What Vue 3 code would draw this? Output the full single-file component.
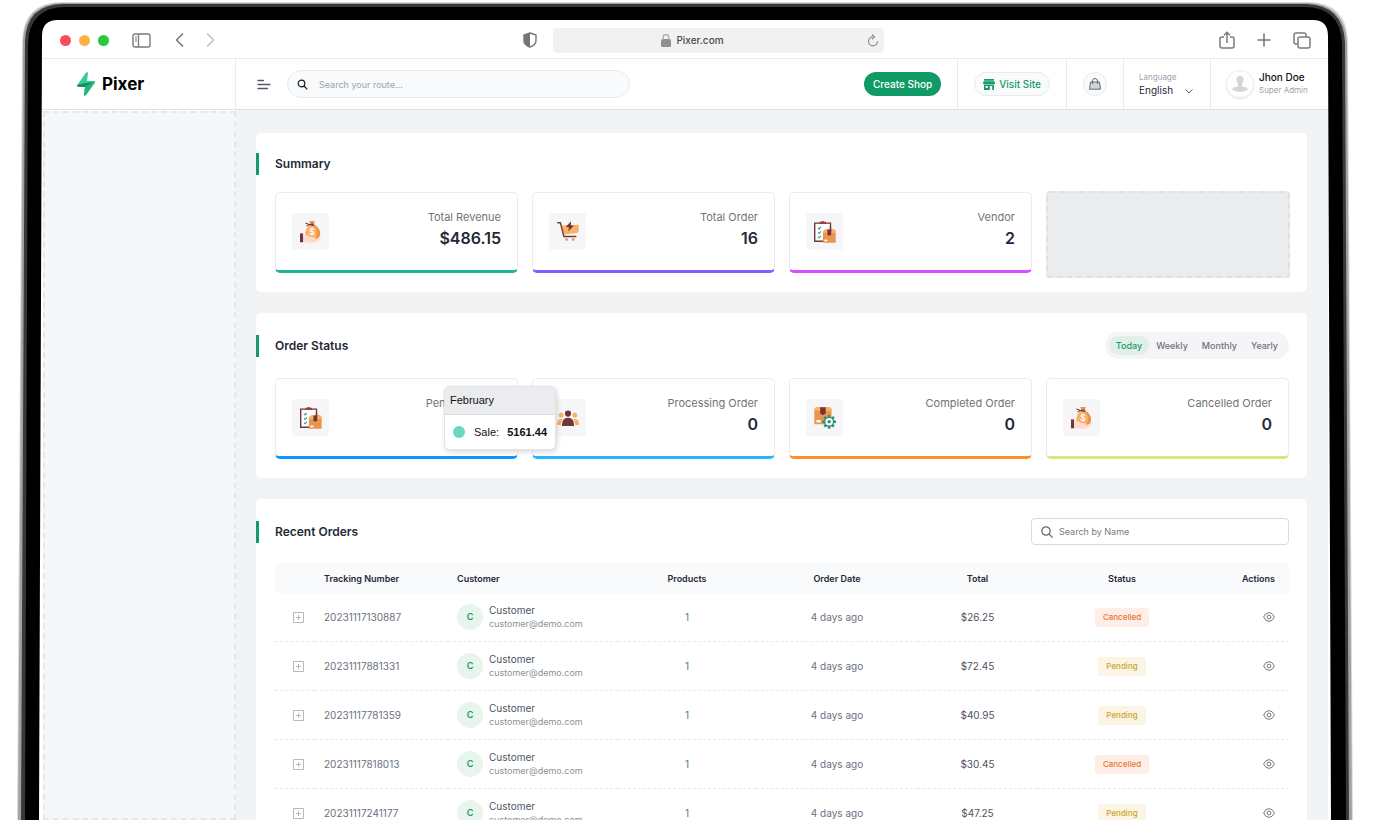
<script setup>
import { ref } from 'vue'

const summary = [
  { label: 'Total Revenue', value: '$486.15', icon: 'money', tone: 'teal' },
  { label: 'Total Order', value: '16', icon: 'cart', tone: 'violet' },
  { label: 'Vendor', value: '2', icon: 'checklist', tone: 'pink' },
]

const statuses = [
  { label: 'Pending Order', value: '0', icon: 'checklist', tone: 'blue', tooltip: true },
  { label: 'Processing Order', value: '0', icon: 'people', tone: 'sky' },
  { label: 'Completed Order', value: '0', icon: 'package', tone: 'orange' },
  { label: 'Cancelled Order', value: '0', icon: 'money', tone: 'lime' },
]

const ranges = ['Today', 'Weekly', 'Monthly', 'Yearly']
const activeRange = ref('Today')

const orders = [
  { tracking: '20231117130887', total: '$26.25', status: 'Cancelled' },
  { tracking: '20231117881331', total: '$72.45', status: 'Pending' },
  { tracking: '20231117781359', total: '$40.95', status: 'Pending' },
  { tracking: '20231117818013', total: '$30.45', status: 'Cancelled' },
  { tracking: '20231117241177', total: '$47.25', status: 'Pending' },
]

const routeSearch = ref('')
const nameSearch = ref('')
const language = ref('English')
</script>

<template>
  <div class="device">
    <svg class="bezel" viewBox="0 0 1376 820" preserveAspectRatio="none" aria-hidden="true">
      <path fill="#d9d9d9" d="M17 824 L22 42 Q23 2 62 2 H1308 Q1347 2 1348 42 L1353 824Z" />
      <path fill="#a2a2a4" d="M18 824 L23 42 Q24 3 63 3 H1307 Q1345 4 1347 42 L1352 824Z" />
      <path fill="#38383a" d="M21 824 L25 42 Q26 4 64 4 H1306 Q1343 5 1345 42 L1349 824Z" />
      <path fill="#000" d="M25 824 L28 44 Q29 7 66 7 H1304 Q1341 7 1342 44 L1346 824Z" />
      <path fill="#fff" d="M39 824 L42 36 Q42 20 58 20 H1313 Q1328 20 1328 36 L1331 824Z" />
    </svg>

    <svg class="sprite" aria-hidden="true">
      <symbol id="money" viewBox="0 0 64 64">
        <path fill="#e9954f" d="M27 0h16l-3 9 h-10z" />
        <path fill="#fab066" d="M28 10h12c13 8 20 20 18 31-2 9-8 12-22 12s-21-4-21-14c0-12 5-21 13-29z" />
        <path fill="#e9954f" d="M38 10h3c13 8 20 20 17 31-1 7-6 11-15 12 9-12 9-29-5-43z" />
        <path fill="none" stroke="#723538" stroke-width="3" d="M16 6l11 4 14-1M19 15l8-5 14 3" />
        <text x="35" y="40" text-anchor="middle" font-family="Inter, sans-serif" font-size="24" font-weight="600" fill="#fff">$</text>
        <path fill="#ffd9cd" d="M10 44c8-4 13-3 19 2l14 2c3 1 3 3 1 5 7 0 12-8 19-8-3 8-12 17-26 18-12 0-19-2-27-3z" />
        <path fill="#723538" d="M0 36h9v26H0z" />
      </symbol>
      <symbol id="cart" viewBox="0 0 64 64">
        <path fill="#fab066" d="M14 13 63 11v19q0 4-5 5l-38 4z" />
        <path fill="#723538" d="m41 1-15 16 9 2-2 11 16-16-9-2z" />
        <path fill="none" stroke="#723538" stroke-width="4" stroke-linecap="round" stroke-linejoin="round" d="M2 5h8l10 40h35" />
        <circle cx="28" cy="54" r="4" fill="#e9954f" />
        <circle cx="47" cy="54" r="4" fill="#e9954f" />
      </symbol>
      <symbol id="checklist" viewBox="0 0 64 64">
        <path fill="#fff" stroke="#723538" stroke-width="4" d="M2 6h46v53H2z" />
        <path fill="#9b3f42" d="M16 2h5q4-5 8 0h6v7H16z" />
        <path fill="none" stroke="#2f967f" stroke-width="3" d="m12 20 3 3 5-6M12 33l3 3 5-6M12 46l3 3 5-6" />
        <path fill="#e9954f" d="M26 33q1-8 9-9h20q8 1 8 9v30H26z" />
        <path fill="#fab066" d="M26 35q1-10 9-11h20q8 1 8 11z" />
        <path fill="#723538" d="M39 25h11v15l-5 3-6-3z" />
        <path fill="#fff" d="M30 54h9v5h-9z" />
        <path fill="none" stroke="#723538" stroke-width="4" d="M48 16v16" />
      </symbol>
      <symbol id="people" viewBox="0 0 64 64">
        <circle cx="12" cy="24" r="7" fill="#fab066" />
        <circle cx="52" cy="24" r="7" fill="#fab066" />
        <path fill="#fab066" d="M0 52q0-18 12-18 7 0 9 5v13zM64 52q0-18-12-18-7 0-9 5v13z" />
        <path fill="#f6f6f8" d="M11 55q0-26 21-26t21 26z" />
        <path fill="#723538" d="M14 55q0-24 18-24t18 24z" />
        <circle cx="32" cy="19" r="9" fill="#723538" />
      </symbol>
      <symbol id="package" viewBox="0 0 64 64">
        <path fill="#e9954f" d="M1 9q1-8 8-8h34q8 0 8 8v41H1z" />
        <path fill="#fab066" d="M1 11q1-10 8-10h34q8 0 8 10z" />
        <path fill="#723538" d="M18 1h16v18l-8 5-8-5z" />
        <path fill="#fff" d="M7 38h13v7H7z" />
        <circle cx="44" cy="43" r="15" fill="#2f8f7b" />
        <path stroke="#2f8f7b" stroke-width="7" d="M44 23v40M24 43h40M30 29l28 28M58 29 30 57" />
        <circle cx="44" cy="43" r="9" fill="#2f8f7b" stroke="#fff" stroke-width="4" />
        <circle cx="44" cy="43" r="8" fill="#fff" />
        <circle cx="44" cy="43" r="5" fill="#2f8f7b" />
      </symbol>
    </svg>

    <div class="screen">
      <div class="browser-bar">
        <div class="bar-left">
          <span class="light red"></span>
          <span class="light amber"></span>
          <span class="light green"></span>
          <button type="button" class="bar-btn panel-btn" aria-label="Toggle sidebar">
            <svg width="19" height="15" viewBox="0 0 19 15" fill="none" stroke="#7b7b7b">
              <rect x="1" y="1" width="17" height="13" rx="2" stroke-width="1.4" />
              <path d="M6.5 1v13" stroke-width="1.3" />
              <path d="M3 4h2M3 6h2M3 8h2" />
            </svg>
          </button>
          <button type="button" class="bar-btn back-btn" aria-label="Back">
            <svg width="10" height="14" viewBox="0 0 10 14" fill="none" stroke="#757575" stroke-width="1.5"><path d="M8 .5 1.500 7 8 13.500" /></svg>
          </button>
          <button type="button" class="bar-btn forward-btn" aria-label="Forward">
            <svg width="10" height="14" viewBox="0 0 10 14" fill="none" stroke="#c0c0c0" stroke-width="1.5"><path d="M2 .5 8.500 7 2 13.500" /></svg>
          </button>
          <svg class="shield" width="14" height="16" viewBox="0 0 14 16">
            <path fill="#fff" stroke="#757575" stroke-width="1.4" d="M7 1 13 3v6c0 3-3 5-6 6.200C4 14 1 12 1 9V3z" />
            <path fill="#757575" d="M7 1v14.200C4 14 1 12 1 9V3z" />
          </svg>
        </div>
        <div class="address">
          <svg class="lock" width="10" height="13" viewBox="0 0 10 13">
            <rect y="5" width="10" height="8" rx="1.500" fill="#919191" />
            <path d="M2.200 6V3.500a2.800 2.800 0 0 1 5.600 0V6" fill="none" stroke="#a5a5a5" stroke-width="1.200" />
          </svg>
          <span>Pixer.com</span>
          <svg class="reload" width="12" height="13" viewBox="0 0 12 13" fill="none" stroke="#8c8c8c" stroke-width="1.200">
            <path d="M6 2.800A4.500 4.500 0 1 0 10.500 7.300M5 .5l2.500 2.300L5 5.300" />
          </svg>
        </div>
        <div class="bar-right">
          <button type="button" class="bar-btn" aria-label="Share">
            <svg width="16" height="18" viewBox="0 0 16 18" fill="none" stroke="#7b7b7b" stroke-width="1.500">
              <path d="M5 6H3Q1 6 1 8v7q0 2 2 2h10q2 0 2-2V8q0-2-2-2h-2M8 12V1.500M5 4.200l3-3 3 3" />
            </svg>
          </button>
          <button type="button" class="bar-btn" aria-label="New tab">
            <svg width="14" height="14" viewBox="0 0 14 14" fill="none" stroke="#7b7b7b" stroke-width="1.600"><path d="M7 .5v13M.5 7h13" /></svg>
          </button>
          <button type="button" class="bar-btn" aria-label="Show tabs">
            <svg width="18" height="17" viewBox="0 0 18 17" fill="none" stroke="#7b7b7b" stroke-width="1.500">
              <rect x="5" y="5" width="12" height="11" rx="2" />
              <path d="M5 12H3q-2 0-2-2V3q0-2 2-2h8q2 0 2 2v2" />
            </svg>
          </button>
        </div>
      </div>

      <header class="header">
        <a href="#" class="logo">
          <svg width="18" height="24" viewBox="0 0 18 24">
            <path fill="#36cf9a" d="M9 .5q2-.8 2 1L10 9h7q1.500.5.5 2L9 23q-2 1.500-2-.5L8 15H1.500Q-.5 14.500.7 12.500z" />
            <path fill="#159260" d="m.7 12.500 16.900-3L8 15H1.500Q-.5 14.500.7 12.500z" />
            <path fill="#22b57f" d="M17.500 9.200q.7.700 0 1.800L9 23q-2 1.500-2-.5L8 15z" />
          </svg>
          <span>Pixer</span>
        </a>
        <div class="nav">
          <button type="button" class="menu-btn" aria-label="Toggle menu">
            <svg width="14" height="11" viewBox="0 0 14 11" fill="none" stroke="#4f5869" stroke-width="1.300" stroke-linecap="round">
              <path d="M1 1.500h5.500M1 5.500h12M1 9.500h9.500" />
            </svg>
          </button>
          <label class="route-search">
            <svg width="11" height="11" viewBox="0 0 11 11" fill="none" stroke="#16191f" stroke-width="1.200"><circle cx="4.500" cy="4.500" r="3.300" /><path d="m7 7 3.300 3.300" /></svg>
            <input v-model="routeSearch" type="text" placeholder="Search your route..." aria-label="Search your route" />
          </label>
          <button type="button" class="create-btn">Create Shop</button>
        </div>
        <div class="cell">
          <a href="#" class="visit">
            <svg width="12" height="11" viewBox="0 0 12 11" fill="#159a69">
              <path d="M1 0h10v1.700H1zM.5 2.200h11L12 5H0z" />
              <path d="M1 5.500h10V11H9.200V7H6.800v4H1zM2.500 7v2h2.300V7z" fill-rule="evenodd" />
            </svg>
            Visit Site
          </a>
        </div>
        <div class="cell">
          <button type="button" class="bag" aria-label="Orders">
            <svg width="12" height="12" viewBox="0 0 12 12" fill="none" stroke="#636b78">
              <path d="M1.500 4h9l1 7.200H.5z" fill="#cfd3da" /><path d="M3.500 6V3a2.500 2.500 0 0 1 5 0v3" />
            </svg>
          </button>
        </div>
        <div class="cell language">
          <label for="language">Language</label>
          <select id="language" v-model="language">
            <option>English</option>
          </select>
          <svg class="caret" width="8" height="5" viewBox="0 0 8 5" fill="none" stroke="#555d68"><path d="m.5.5 3.500 3.500L7.500.5" /></svg>
        </div>
        <div class="cell user">
          <span class="avatar">
            <svg width="16" height="16" viewBox="0 0 16 16" fill="#d4d6d9">
              <path d="M8 0q4 0 3.600 4Q11 8 8 8.500 5 8 4.400 4 4 0 8 0z" /><path d="M6 7h4v3.500q6 .5 6 3Q13 16 8 16t-8-2.500q0-2.500 6-3z" />
            </svg>
          </span>
          <span class="user-text">
            <strong>Jhon Doe</strong>
            <small>Super Admin</small>
          </span>
        </div>
      </header>

      <div class="body">
        <aside class="sidebar"></aside>
        <main class="main">
          <section class="panel">
            <div class="panel-head short">
              <h2>Summary</h2>
            </div>
            <div class="stats">
              <article v-for="item in summary" :key="item.label" class="stat" :class="item.tone">
                <span class="stat-icon"><svg width="22" height="22"><use :href="`#${item.icon}`" /></svg></span>
                <div class="stat-text">
                  <p>{{ item.label }}</p>
                  <strong>{{ item.value }}</strong>
                </div>
              </article>
              <div class="placeholder"></div>
            </div>
          </section>

          <section class="panel">
            <div class="panel-head">
              <h2>Order Status</h2>
              <div class="ranges">
                <button
                  v-for="range in ranges"
                  :key="range"
                  type="button"
                  :class="{ active: range === activeRange }"
                  @click="activeRange = range"
                >
                  {{ range }}
                </button>
              </div>
            </div>
            <div class="stats">
              <article v-for="item in statuses" :key="item.label" class="stat" :class="item.tone">
                <span class="stat-icon"><svg width="22" height="22"><use :href="`#${item.icon}`" /></svg></span>
                <div class="stat-text">
                  <p>{{ item.label }}</p>
                  <strong>{{ item.value }}</strong>
                </div>
                <div v-if="item.tooltip" class="tooltip">
                  <div class="tooltip-title">February</div>
                  <div class="tooltip-row"><i></i><span>Sale:</span><b>5161.44</b></div>
                </div>
              </article>
            </div>
          </section>

          <section class="panel">
            <div class="panel-head">
              <h2>Recent Orders</h2>
              <label class="name-search">
                <svg width="12" height="12" viewBox="0 0 12 12" fill="none" stroke="#666" stroke-width="1.200"><circle cx="5" cy="5" r="4.200" /><path d="m8 8 3.600 3.600" /></svg>
                <input v-model="nameSearch" type="text" placeholder="Search by Name" aria-label="Search by Name" />
              </label>
            </div>
            <table class="orders">
              <colgroup>
                <col class="col-expand" />
                <col class="col-tracking" />
                <col class="col-customer" />
                <col class="col-products" />
                <col class="col-date" />
                <col class="col-total" />
                <col class="col-status" />
                <col class="col-actions" />
              </colgroup>
              <thead>
                <tr>
                  <th></th>
                  <th class="left">Tracking Number</th>
                  <th class="left">Customer</th>
                  <th>Products</th>
                  <th>Order Date</th>
                  <th>Total</th>
                  <th>Status</th>
                  <th class="right">Actions</th>
                </tr>
              </thead>
              <tbody>
                <tr v-for="order in orders" :key="order.tracking">
                  <td>
                    <button type="button" class="icon-btn expand" aria-label="Expand row">
                      <svg width="11" height="11" viewBox="0 0 11 11" fill="none" stroke="#b9b9b9"><path d="M.5.5h10v10H.5zM3 5.500h5M5.500 3v5" /></svg>
                    </button>
                  </td>
                  <td class="left">{{ order.tracking }}</td>
                  <td class="left">
                    <div class="customer">
                      <span class="initial">C</span>
                      <span class="customer-text">
                        <span>Customer</span>
                        <small>customer@demo.com</small>
                      </span>
                    </div>
                  </td>
                  <td>1</td>
                  <td>4 days ago</td>
                  <td class="total">{{ order.total }}</td>
                  <td><span class="badge" :class="order.status.toLowerCase()">{{ order.status }}</span></td>
                  <td class="right">
                    <button type="button" class="icon-btn view" aria-label="View order">
                      <svg width="12" height="10" viewBox="0 0 12 10" fill="none" stroke="#6b6b6b" stroke-width=".9"><path d="M.6 5Q2.500.6 6 .6T11.400 5Q9.500 9.400 6 9.400T.6 5z" /><circle cx="6" cy="5" r="1.900" /></svg>
                    </button>
                  </td>
                </tr>
              </tbody>
            </table>
          </section>
        </main>
      </div>
    </div>
  </div>
</template>

<style>
body {
  margin: 0;
  background: #fff;
}
</style>

<style scoped>
.device {
  position: relative;
  box-sizing: border-box;
  height: 100vh;
  padding: 20px 48px 0 42px;
  overflow: hidden;
  font-family: Inter, sans-serif;
  font-size: 10px;
  color: #6b7280;
}

.device *,
.device *::before {
  box-sizing: border-box;
}

.bezel {
  position: absolute;
  inset: 0;
  width: 100%;
  height: 100%;
}

.sprite {
  display: none;
}

button,
input,
select {
  font: inherit;
  color: inherit;
  border: 0;
  margin: 0;
  padding: 0;
  background: none;
}

button {
  cursor: pointer;
}

a {
  text-decoration: none;
}

.screen {
  position: relative;
  display: flex;
  flex-direction: column;
  height: 100%;
}

/* browser chrome */
.browser-bar {
  display: grid;
  grid-template-columns: 511fr 331fr 444fr;
  align-items: center;
  flex: none;
  height: 39px;
  border-bottom: 1px solid #ececec;
}

.bar-left {
  display: flex;
  align-items: center;
  padding: 2px 16px 0 18px;
}

.light {
  width: 11px;
  height: 11px;
  margin-right: 8px;
  border-radius: 50%;
}

.red {
  background: #fc4b5a;
}

.amber {
  background: #fdb244;
}

.green {
  background: #28c840;
}

.bar-btn {
  display: flex;
}

.panel-btn {
  margin-left: 15px;
}

.back-btn {
  margin-left: 24px;
}

.forward-btn {
  margin-left: 20px;
}

.shield {
  margin-left: auto;
}

.address {
  position: relative;
  display: flex;
  align-items: center;
  justify-content: center;
  gap: 5px;
  height: 25px;
  margin-top: 2px;
  padding-right: 52px;
  border-radius: 4px;
  background: #f1f1f1;
  color: #4b4b4b;
  font-weight: 500;
}

.reload {
  position: absolute;
  right: 5px;
}

.bar-right {
  display: flex;
  align-items: center;
  justify-content: flex-end;
  gap: 22px;
  padding: 2px 17px 0 0;
}

/* app header */
.header {
  display: flex;
  flex: none;
  height: 51px;
  border-bottom: 1px solid #dfe2e5;
}

.logo {
  display: flex;
  align-items: center;
  gap: 7px;
  width: 194px;
  padding-left: 35px;
  border-right: 1px solid #ececec;
  color: #000;
  font-size: 17px;
  font-weight: 700;
}

.nav {
  display: flex;
  flex: 1;
  align-items: center;
  padding: 0 16px 0 21px;
}

.menu-btn {
  display: flex;
  margin-right: 16px;
}

.route-search {
  display: flex;
  align-items: center;
  gap: 11px;
  width: 343px;
  height: 28px;
  padding: 0 9px;
  border: 1px solid #e8eaee;
  border-radius: 14px;
  background: #f9fafc;
  font-size: 9px;
}

.route-search input,
.name-search input {
  flex: 1;
  min-width: 0;
  outline: 0;
}

.route-search input::placeholder {
  color: #9ca3af;
}

.create-btn {
  height: 24px;
  margin-left: auto;
  padding: 0 9px;
  border-radius: 12px;
  background: #109a66;
  color: #fff;
  font-weight: 500;
}

.cell {
  display: flex;
  align-items: center;
  padding: 0 16px;
  border-left: 1px solid #ececec;
}

.visit {
  display: flex;
  align-items: center;
  gap: 4px;
  height: 24px;
  padding: 0 8px;
  border: 1px solid #e8eaee;
  border-radius: 12px;
  background: #f9fafc;
  color: #159a69;
  font-weight: 500;
}

.bag {
  display: flex;
  align-items: center;
  justify-content: center;
  width: 24px;
  height: 24px;
  border: 1px solid #e8eaee;
  border-radius: 50%;
  background: #f9fafc;
}

.language {
  position: relative;
  flex-direction: column;
  align-items: flex-start;
  justify-content: center;
  width: 87px;
  padding-left: 15px;
}

.language label {
  color: #9ca3af;
  font-size: 8px;
  line-height: 13px;
}

.language select {
  width: 100%;
  height: 13px;
  appearance: none;
  color: #1f2937;
  line-height: 13px;
}

.caret {
  position: absolute;
  right: 17px;
  bottom: 15px;
  pointer-events: none;
}

.user {
  gap: 5px;
  width: 118px;
  padding: 0 0 0 15px;
}

.avatar {
  display: flex;
  align-items: center;
  justify-content: center;
  width: 28px;
  height: 28px;
  border: 1px solid #eee;
  border-radius: 50%;
  box-shadow: 0 1px 2px rgba(0, 0, 0, 0.12);
}

.user-text {
  display: flex;
  flex-direction: column;
}

.user-text strong {
  color: #111;
  font-weight: 500;
  line-height: 13px;
}

.user-text small {
  color: #9ca3af;
  font-size: 8px;
  line-height: 13px;
}

/* page */
.body {
  display: flex;
  flex: 1;
  min-height: 0;
}

.sidebar {
  flex: none;
  width: 193px;
  margin: 1px 0 0 1px;
  border: 2px dashed #e2e8ee;
  background: #f5f7f9;
}

.main {
  display: flex;
  flex: 1;
  flex-direction: column;
  gap: 21px;
  min-width: 0;
  padding: 23px 21px 0 20px;
  overflow: hidden;
  background: #f2f3f5;
}

.panel {
  flex: none;
  padding: 19px 18px 19px 19px;
  border-radius: 5px;
  background: #fff;
}

.panel-head {
  position: relative;
  display: flex;
  align-items: center;
  justify-content: space-between;
  height: 27px;
  margin-bottom: 19px;
}

.panel-head.short {
  height: 23px;
  margin-bottom: 17px;
}

.panel-head::before {
  content: '';
  position: absolute;
  left: -19px;
  width: 3px;
  height: 22px;
  background: #159a69;
}

.panel-head h2 {
  margin: 0;
  color: #1f2937;
  font-size: 12px;
  font-weight: 600;
}

.stats {
  display: grid;
  grid-template-columns: repeat(4, 1fr);
  gap: 14px;
}

.stat {
  position: relative;
  display: flex;
  justify-content: space-between;
  height: 81px;
  padding: 20px 16px 0;
  border: 1px solid #ececee;
  border-bottom: 3px solid;
  border-radius: 5px;
}

.teal {
  border-bottom-color: #1fb397;
}

.violet {
  border-bottom-color: #865dff;
}

.pink {
  border-bottom-color: #d74eff;
}

.blue {
  border-bottom-color: #0c96ff;
}

.sky {
  border-bottom-color: #28b7ff;
}

.orange {
  border-bottom-color: #ff8d29;
}

.lime {
  border-bottom-color: #d7e67d;
}

.stat-icon {
  display: flex;
  align-items: center;
  justify-content: center;
  width: 37px;
  height: 37px;
  border-radius: 3px;
  background: #f6f6f8;
}

.stat-text {
  display: flex;
  flex-direction: column;
  align-items: flex-end;
}

.stat-text p {
  margin: -4px 0 0;
  color: #6f7575;
  font-size: 11px;
  line-height: 16px;
}

.stat-text strong {
  color: #1f2937;
  font-size: 16px;
  font-weight: 600;
  line-height: 26px;
}

.placeholder {
  margin: -1px -1px -5px 0;
  border: 2px dashed #dce2e8;
  border-radius: 3px;
  background: #ebecee;
}

.ranges {
  display: flex;
  height: 27px;
  padding: 4px;
  border-radius: 14px;
  background: #f5f5f8;
  font-size: 9px;
}

.ranges button {
  padding: 0 7px;
  border-radius: 10px;
  font-weight: 500;
}

.ranges .active {
  background: #e1efe9;
  color: #159a69;
}

.tooltip {
  position: absolute;
  z-index: 1;
  top: 7px;
  right: -39px;
  width: 112px;
  border: 1px solid #e3e3e3;
  border-radius: 5px;
  background: #fff;
  box-shadow: 1px 2px 5px rgba(0, 0, 0, 0.15);
  color: #111;
  font-family: 'Liberation Sans', sans-serif;
  font-size: 11px;
  overflow: hidden;
}

.tooltip-title {
  height: 28px;
  padding-left: 5px;
  border-bottom: 1px solid #ddd;
  background: #ebecef;
  line-height: 27px;
}

.tooltip-row {
  display: flex;
  align-items: center;
  height: 34px;
  padding: 0 8px;
}

.tooltip-row i {
  width: 12px;
  height: 12px;
  margin-right: 9px;
  border-radius: 50%;
  background: #66dabf;
}

.tooltip-row b {
  margin-left: auto;
}

.name-search {
  display: flex;
  align-items: center;
  gap: 6px;
  width: 258px;
  height: 27px;
  padding: 0 9px;
  border: 1px solid #d9dbdf;
  border-radius: 4px;
  font-size: 9px;
}

.name-search input::placeholder {
  color: #777d87;
}

/* orders */
.panel-head:has(.name-search) {
  margin-bottom: 18px;
}

.orders {
  width: 100%;
  border-collapse: separate;
  border-spacing: 0;
  table-layout: fixed;
}

.col-expand {
  width: 40px;
}

.col-tracking {
  width: 133px;
}

.col-customer,
.col-status {
  width: 170px;
}

.col-products {
  width: 138px;
}

.col-date {
  width: 162px;
}

.col-total {
  width: 119px;
}

.col-actions {
  width: 82px;
}

.orders th {
  height: 30px;
  padding: 0;
  background: #f9fafc;
  color: #1f2937;
  font-size: 9px;
  font-weight: 600;
}

.orders td {
  height: 49px;
  padding: 0;
  border-bottom: 1px dashed #e8e8e8;
  text-align: center;
}

.orders .left {
  padding-left: 9px;
  text-align: left;
}

.orders .right {
  padding-right: 14px;
  text-align: right;
}

.orders .total {
  color: #4b5563;
}

.icon-btn {
  display: flex;
}

.expand {
  margin-left: 18px;
}

.view {
  margin-left: auto;
}

.customer {
  display: flex;
  align-items: center;
  gap: 6px;
}

.initial {
  width: 26px;
  height: 26px;
  border-radius: 50%;
  background: #e8f4ee;
  color: #159a69;
  font-size: 9px;
  font-weight: 600;
  line-height: 26px;
  text-align: center;
}

.customer-text {
  display: flex;
  flex-direction: column;
  color: #4b5563;
  line-height: 14px;
}

.customer-text small {
  color: #8b929c;
  font-size: 9px;
}

.badge {
  display: inline-block;
  padding: 0 8px;
  border-radius: 3px;
  font-size: 8px;
  font-weight: 500;
  line-height: 19px;
}

.cancelled {
  background: #feeee7;
  color: #e8762d;
}

.pending {
  background: #faf5e5;
  color: #cfa425;
}
</style>
